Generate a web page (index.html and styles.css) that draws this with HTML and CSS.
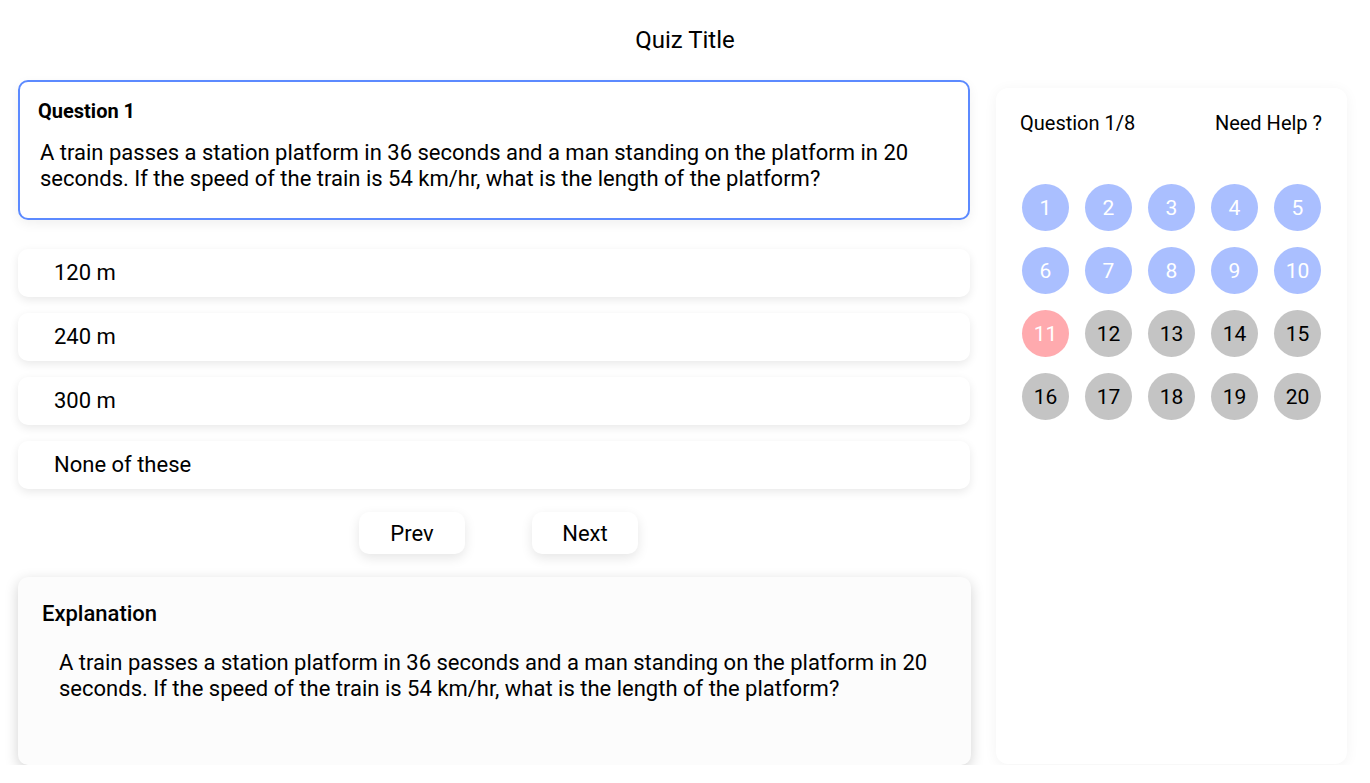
FILE: index.html
```html
<!DOCTYPE html>
<html>
<head>
<meta charset="utf-8">
<link rel="stylesheet" href="styles.css">
</head>
<body>
<header class="header">Quiz Title</header>
<main class="main">
  <section class="left">
    <div class="question-card">
      <div class="q-label">Question 1</div>
      <p class="q-text">A train passes a station platform in 36 seconds and a man standing on the platform in 20 seconds. If the speed of the train is 54 km/hr, what is the length of the platform?</p>
    </div>
    <div class="options">
      <div class="option">120 m</div>
      <div class="option">240 m</div>
      <div class="option">300 m</div>
      <div class="option">None of these</div>
    </div>
    <div class="nav">
      <button class="btn">Prev</button>
      <button class="btn">Next</button>
    </div>
    <div class="explanation">
      <div class="exp-title">Explanation</div>
      <p class="exp-text">A train passes a station platform in 36 seconds and a man standing on the platform in 20 seconds. If the speed of the train is 54 km/hr, what is the length of the platform?</p>
    </div>
  </section>
  <aside class="panel">
    <div class="panel-head">
      <span>Question 1/8</span>
      <span>Need Help ?</span>
    </div>
    <div class="grid">
      <div class="dot done">1</div>
      <div class="dot done">2</div>
      <div class="dot done">3</div>
      <div class="dot done">4</div>
      <div class="dot done">5</div>
      <div class="dot done">6</div>
      <div class="dot done">7</div>
      <div class="dot done">8</div>
      <div class="dot done">9</div>
      <div class="dot done">10</div>
      <div class="dot wrong">11</div>
      <div class="dot">12</div>
      <div class="dot">13</div>
      <div class="dot">14</div>
      <div class="dot">15</div>
      <div class="dot">16</div>
      <div class="dot">17</div>
      <div class="dot">18</div>
      <div class="dot">19</div>
      <div class="dot">20</div>
    </div>
  </aside>
</main>
</body>
</html>
```
FILE: styles.css
```css
* { box-sizing: border-box; }
html, body {
  margin: 0;
  padding: 0;
  background: #ffffff;
  font-family: Roboto, "Liberation Sans", sans-serif;
  color: #000;
}
.header {
  height: 80px;
  line-height: 80px;
  text-align: center;
  font-size: 24px;
  font-weight: 400;
}
.main {
  display: flex;
  gap: 26px;
  padding-left: 18px;
  padding-right: 23px;
  align-items: stretch;
}
.left {
  width: 952px;
  display: flex;
  flex-direction: column;
}
.question-card {
  border: 2px solid #5c8aff;
  border-radius: 10px;
  height: 140px;
  padding: 18px 18px 0 18px;
  box-shadow: 0 4px 12px rgba(0,0,0,0.06);
}
.q-label {
  font-size: 20px;
  font-weight: 700;
  line-height: 22px;
}
.q-text {
  margin: 18px 0 0 2px;
  font-size: 22px;
  line-height: 26px;
}
.options {
  margin-top: 29px;
  display: flex;
  flex-direction: column;
  gap: 16px;
}
.option {
  height: 48px;
  line-height: 48px;
  padding-left: 36px;
  font-size: 22px;
  background: #fff;
  border-radius: 10px;
  box-shadow: 0 3px 10px rgba(0,0,0,0.09);
}
.nav {
  margin-top: 23px;
  display: flex;
  justify-content: center;
  gap: 67px;
  padding-left: 9px;
}
.btn {
  width: 106px;
  height: 42px;
  border: none;
  background: #fff;
  border-radius: 10px;
  font-family: Roboto, "Liberation Sans", sans-serif;
  font-size: 22px;
  color: #000;
  box-shadow: 0 4px 12px rgba(0,0,0,0.1);
}
.explanation {
  margin-top: 23px;
  height: 188px;
  width: 953px;
  background: #fcfcfc;
  border-radius: 10px;
  padding: 24px 24px 0 24px;
  box-shadow: 0 4px 14px rgba(0,0,0,0.18);
}
.exp-title {
  font-size: 22px;
  font-weight: 500;
  line-height: 26px;
}
.exp-text {
  margin: 23px 0 0 17px;
  font-size: 22px;
  line-height: 26px;
}
.panel {
  width: 351px;
  margin-top: 8px;
  margin-bottom: 1px;
  background: #fff;
  border-radius: 12px;
  padding: 24px 25px 0 24px;
  box-shadow: 0 2px 14px rgba(0,0,0,0.05);
}
.panel-head {
  display: flex;
  justify-content: space-between;
  font-size: 20px;
  line-height: 22px;
}
.grid {
  margin-top: 50px;
  margin-left: 2px;
  display: grid;
  grid-template-columns: repeat(5, 47px);
  grid-auto-rows: 47px;
  gap: 16px;
}
.dot {
  width: 47px;
  height: 47px;
  border-radius: 50%;
  background: #c4c4c4;
  color: #000;
  display: flex;
  align-items: center;
  justify-content: center;
  font-size: 21px;
}
.dot.done {
  background: #aabfff;
  color: #fff;
}
.dot.wrong {
  background: #ffaaae;
  color: #fff;
}
```
